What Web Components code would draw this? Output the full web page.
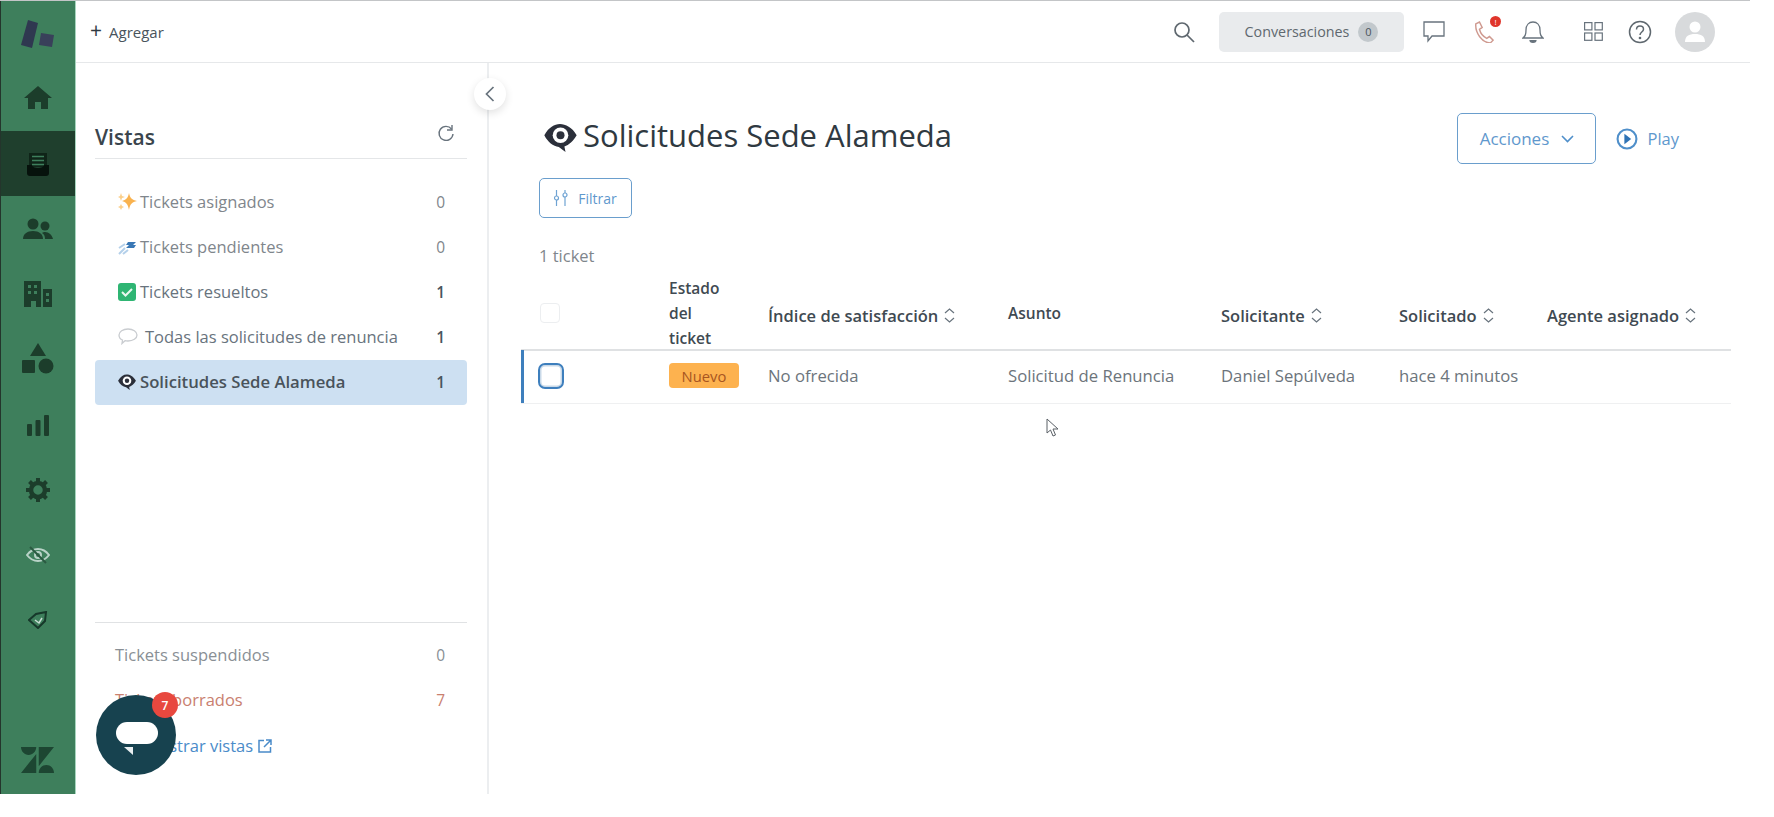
<!DOCTYPE html>
<html lang="es"><head><meta charset="utf-8"><title>Solicitudes Sede Alameda</title>
<style>
html,body{margin:0;padding:0;background:#fff;height:817px;overflow:hidden;font-family:"Open Sans","Noto Sans",sans-serif;color:#2f3941}
</style></head><body>
<x-app></x-app>
<script>
const EYE='<path d="M0 11C4 4 9 1 14 1s11 3 15 10c-3 5-7 9-11 10l1 5-6-4.500C8 21 3 17 0 11z" fill="currentColor"/><circle cx="14.500" cy="11" r="7" fill="#fff"/><circle cx="14.500" cy="11" r="3.600" fill="currentColor"/>';
const ICONS={
 logo:'<svg width="34" height="28" viewBox="0 0 34 28"><path d="M7 0l10 3-6 25-11-3z" fill="#2f3850"/><path d="M20 13l13 2-2 12-13-2z" fill="#39405a"/></svg>',
 home:'<svg width="28" height="24" viewBox="0 0 28 24" fill="currentColor"><path d="M14 1L0 13h4v11h7v-7h6v7h7V13h4z"/></svg>',
 tickets:'<svg width="22" height="24" viewBox="0 0 22 24"><path d="M2 1h18v14H2z" fill="#0f2418"/><path d="M5 4.500h12M5 8.500h12M5 12.500h12" stroke="#3e7f5c" stroke-width="1.600"/><path d="M0 13h5c0 2 3 3 6 3s6-1 6-3h5v8c0 2-1 3-3 3H3c-2 0-3-1-3-3z" fill="#06120c"/></svg>',
 people:'<svg width="30" height="22" viewBox="0 0 30 22" fill="currentColor"><circle cx="10" cy="6" r="5.500"/><path d="M0 21c0-5 4-8 10-8s10 3 10 8z"/><circle cx="22" cy="8" r="4.500"/><path d="M22 14c4 0 7 3 8 7h-8c0-3-1-5-3-6 1-1 2-1 3-1z"/></svg>',
 org:'<svg width="28" height="26" viewBox="0 0 28 26" fill="currentColor"><path fill-rule="evenodd" d="M0 0h17v26h-5v-6H7v6H0zM4 4v3h3V4zm6 0v3h3V4zM4 10v3h3v-3zm6 0v3h3v-3zM19 8h9v18h-9zm3 4v3h3v-3zm0 6v3h3v-3z"/></svg>',
 shapes:'<svg width="32" height="31" viewBox="0 0 32 31" fill="currentColor"><path d="M16 0l8 13H8z"/><rect y="17" width="13" height="13" rx="1"/><circle cx="24" cy="23" r="7.500"/></svg>',
 chart:'<svg width="22" height="21" viewBox="0 0 22 21" fill="currentColor"><rect y="9" width="5" height="12" rx="1"/><rect x="8.500" y="5" width="5" height="16" rx="1"/><rect x="17" width="5" height="21" rx="1"/></svg>',
 gear:'<svg width="24" height="24" viewBox="0 0 24 24"><circle cx="12" cy="12" r="7" fill="none" stroke="currentColor" stroke-width="4.500"/><path d="M12 0v5M12 19v5M0 12h5M19 12h5M3.500 3.500l3.500 3.500M17 17l3.500 3.500M20.500 3.500L17 7M7 17l-3.500 3.500" stroke="currentColor" stroke-width="4"/></svg>',
 eyeoff:'<svg width="24" height="18" viewBox="0 0 24 18" fill="none" stroke="#b9d3c8" stroke-width="2"><path d="M1 9c3-4 7-6 11-6s8 2 11 6c-3 4-7 6-11 6S4 13 1 9z"/><circle cx="12" cy="9" r="3"/><path d="M4 1l16 16" stroke="#2b5a42"/></svg>',
 tag:'<svg width="20" height="18" viewBox="0 0 20 18" fill="none" stroke="#16382a" stroke-width="2"><path d="M1 9l7-6 10-2-1 9-7 7z"/><path d="M7 9l4 3 3-5" stroke="#c9ded4" stroke-width="1.500"/></svg>',
 zd:'<svg width="33" height="26" viewBox="0 2.900 24 18.200" fill="#1d4632" preserveAspectRatio="none"><path d="M12.914 2.904V16.29L24 2.905H12.914zM0 2.906C0 5.966 2.483 8.45 5.543 8.45s5.542-2.484 5.543-5.544H0zm11.086 4.807L0 21.096h11.086V7.713zm7.37 7.840c-3.063 0-5.542 2.480-5.542 5.543H24c0-3.060-2.480-5.543-5.543-5.543z"/></svg>',
 search:'<svg width="22" height="22" viewBox="0 0 22 22" fill="none" stroke="#5f686f" stroke-width="1.700"><circle cx="9" cy="9" r="7"/><path d="M14 14l7 7"/></svg>',
 chat:'<svg width="22" height="22" viewBox="0 0 22 22" fill="none" stroke="#68737d" stroke-width="1.300"><path d="M1 1h20v14H9l-4 5v-5H1z"/></svg>',
 phone:'<svg width="20" height="22" viewBox="0 0 22 24" fill="none" stroke="#cf9a90" stroke-width="1.600"><path d="M2 3l4-2 3 6-3 2c1 4 4 8 8 10l3-2 4 4-3 3C9 24 1 13 2 3z"/></svg>',
 bell:'<svg width="22" height="24" viewBox="0 0 22 24" fill="none" stroke="#68737d" stroke-width="1.300"><path d="M1 18c2-2 3-3 3-8 0-5 3-8 7-8s7 3 7 8c0 5 1 6 3 8z"/><path d="M8 20c0 3 6 3 6 0" fill="#68737d"/></svg>',
 grid:'<svg width="19" height="19" viewBox="0 0 19 19" fill="none" stroke="#68737d" stroke-width="1.200"><rect x=".6" y=".6" width="7.300" height="7.300"/><rect x="11" y=".6" width="7.300" height="7.300"/><rect x=".6" y="11" width="7.300" height="7.300"/><rect x="11" y="11" width="7.300" height="7.300"/></svg>',
 avatar:'<svg width="20" height="22" viewBox="0 0 20 22" fill="#fff"><circle cx="10" cy="6" r="5.500"/><path d="M0 21c0-6 4-8 10-8s10 2 10 8z"/></svg>',
 refresh:'<svg width="19" height="19" viewBox="0 0 19 19" fill="none" stroke="#68737d" stroke-width="1.400"><path d="M15.500 5A7 7 0 1 0 17 10"/><path d="M16 1v5h-5" stroke-width="1.400"/></svg>',
 sparkle:'<svg width="19" height="19" viewBox="0 0 19 19"><path d="M11 1c1 5 3 7 8 8-5 1-7 3-8 9-1-6-3-8-7-9 4-1 6-3 7-8z" fill="#f9b24e"/><path d="M3 1l1 3 3 1-3 1-1 3-1-3-2-1 2-1zM3 12l1 2 2 1-2 1-1 2-1-2-2-1 2-1z" fill="#fbcf8a"/></svg>',
 comet:'<svg width="19" height="16" viewBox="0 0 19 16"><path d="M10 3h8l-3 3h3l-2 3H8l3-3H8z" fill="#3a78b5"/><path d="M7 5L1 9M7 9l-6 6M10 11l-5 4" stroke="#b4d0ea" stroke-width="2"/></svg>',
 check:'<svg width="18" height="18" viewBox="0 0 18 18"><rect width="18" height="18" rx="3" fill="#2fb573"/><path d="M4 9l3.500 3.500L14 6" fill="none" stroke="#e8f8ef" stroke-width="2"/></svg>',
 bubble:'<svg width="20" height="17" viewBox="0 0 20 17" fill="none" stroke="#c9ccd0" stroke-width="1.300"><path d="M10 1c5 0 9 2.500 9 6s-4 6-9 6c-1 0-2 0-3-.300L4 15.500l.500-3.500C2 11 1 9 1 7c0-3.500 4-6 9-6z"/></svg>',
 eye:'<svg width="18" height="16" viewBox="0 0 29 26" style="color:#2b2f3a">'+EYE+'</svg>',
 eyeBig:'<svg width="33" height="29" viewBox="0 0 29 26" style="color:#2b2f3a">'+EYE+'</svg>',
 ext:'<svg width="14" height="14" viewBox="0 0 14 14" fill="none" stroke="#4a8bc9" stroke-width="1.500"><path d="M6 1.500H1V13h11.500V8M8 1h5v5M13 1L6 8"/></svg>',
 sliders:'<svg width="14" height="16" viewBox="0 0 14 16" fill="none" stroke="#6fa3d3" stroke-width="1.200"><path d="M2.500 0v6M2.500 10v6M11 0v3M11 7v9"/><circle cx="2.500" cy="8" r="2"/><circle cx="11" cy="5" r="2"/></svg>',
 chev:'<svg width="13" height="8" viewBox="0 0 13 8" fill="none" stroke="#4f8fca" stroke-width="1.600"><path d="M1 1l5.500 5.500L12 1"/></svg>',
 play:'<svg width="22" height="22" viewBox="0 0 21 21"><circle cx="10.500" cy="10.500" r="9" fill="none" stroke="#4f8fca" stroke-width="2"/><path d="M8 5.500l6.500 5L8 15.500z" fill="#2f73b5"/></svg>',
 sort:'<svg width="11" height="15" viewBox="0 0 11 15" fill="none" stroke="#68737d" stroke-width="1.200"><path d="M1 5l4.500-4L10 5M1 10l4.500 4L10 10"/></svg>',
 back:'<svg width="10" height="16" viewBox="0 0 10 16" fill="none" stroke="#68737d" stroke-width="1.700"><path d="M8.500 1L1.500 8l7 7"/></svg>',
 cursor:'<svg width="13" height="19" viewBox="0 0 13 19" fill="#fff" stroke="#5a6066" stroke-width="1"><path d="M1 1v14l3.500-3 2.500 6 2.500-1-2.500-6H12z"/></svg>',
 help:'<svg width="24" height="24" viewBox="0 0 24 24" fill="none" stroke="#5f686f" stroke-width="1.500"><circle cx="12" cy="12" r="10.500"/><path d="M8.500 9.500c0-2 1.500-3.500 3.500-3.500s3.500 1.300 3.500 3.200c0 2.800-3.500 2.800-3.500 5.800"/><circle cx="12" cy="18" r=".6" fill="#5f686f"/></svg>'
};
function def(name,css,html){
 customElements.define(name,class extends HTMLElement{
  constructor(){super();this.attachShadow({mode:'open'});}
  connectedCallback(){
   const a=n=>this.getAttribute(n)||'';
   this.shadowRoot.innerHTML='<style>'+css+'</style>'+(typeof html==='function'?html(a):html);
  }
 });
}
def('x-app',`:host{display:flex;width:1750px;height:794px;box-sizing:border-box;border-top:1px solid #c3c5c7}
 .right{flex:1;display:flex;flex-direction:column;min-width:0}
 .body{flex:1;display:flex;min-height:0}`,
 `<x-rail></x-rail><div class="right"><x-topbar></x-topbar><div class="body"><x-sidebar></x-sidebar><x-main></x-main></div></div><x-launcher></x-launcher><x-cursor></x-cursor>`);

def('x-rail-item',`:host{display:flex;align-items:center;justify-content:center;height:65px;color:#1c3d2b}
 :host([active]){background:#1f3f2d}
 :host([icon=home]) svg{margin-top:-4px}
 :host([icon=chart]) svg{margin-top:4px}
 :host([icon=gear]) svg,:host([icon=eyeoff]) svg,:host([icon=tag]) svg{margin-top:2px}
 svg{margin-left:-1px}`,a=>ICONS[a('icon')]);
def('x-rail',`:host{display:flex;flex-direction:column;width:76px;flex:none;box-sizing:border-box;background:#3e7f5c;border-left:1px solid #24352c;border-right:1px solid #a8d6bf}
 .logo{height:65px;display:flex;align-items:center;justify-content:center}
 svg{margin-left:-1px}
 .zd{margin-top:auto;height:47px;display:flex;align-items:flex-start;justify-content:center}`,
 `<div class="logo">${ICONS.logo}</div>
 <x-rail-item icon="home"></x-rail-item><x-rail-item icon="tickets" active></x-rail-item><x-rail-item icon="people"></x-rail-item><x-rail-item icon="org"></x-rail-item><x-rail-item icon="shapes"></x-rail-item><x-rail-item icon="chart"></x-rail-item><x-rail-item icon="gear"></x-rail-item><x-rail-item icon="eyeoff"></x-rail-item><x-rail-item icon="tag"></x-rail-item>
 <div class="zd">${ICONS.zd}</div>`);

def('x-topbar',`:host{display:flex;align-items:center;height:62px;flex:none;box-sizing:border-box;border-bottom:1px solid #e6e8ea;padding:0 35px 0 14px;font-size:15px;color:#49545c}
 .add{display:flex;align-items:center;gap:7px}
 .plus{font-size:21px;line-height:1;font-weight:400;color:#2f3941;margin-top:-3px}
 .end{margin-left:auto;display:flex;align-items:center}
 .conv{display:flex;align-items:center;justify-content:center;gap:9px;width:185px;height:40px;background:#e9ebed;border-radius:5px;margin:0 19px 0 24px;color:#5f686f;font-size:14.300px}
 .n{width:20px;height:20px;border-radius:50%;background:#c2c8cc;display:flex;align-items:center;justify-content:center;font-size:11px;color:#49545c}
 .ic{position:relative;display:flex;align-items:center;justify-content:center}
 .dot{position:absolute;top:-5px;right:-7px;width:11px;height:11px;border-radius:50%;background:#e0352b;color:#fff;font-size:8px;line-height:11px;text-align:center}
 .av{width:40px;height:40px;border-radius:50%;background:#d8dadc;display:flex;align-items:center;justify-content:center;margin-left:23px}`,
 `<div class="add"><span class="plus">+</span><span>Agregar</span></div>
 <div class="end"><span class="ic">${ICONS.search}</span><div class="conv"><span>Conversaciones</span><span class="n">0</span></div>
 <span class="ic">${ICONS.chat}</span><span class="ic" style="margin-left:29px">${ICONS.phone}<span class="dot">!</span></span><span class="ic" style="margin-left:28px">${ICONS.bell}</span><span class="ic" style="margin-left:40px">${ICONS.grid}</span><span class="ic" style="margin-left:25px">${ICONS.help}</span><span class="av">${ICONS.avatar}</span></div>`);

def('x-view-row',`:host{display:flex;align-items:center;height:45px;box-sizing:border-box;padding:0 22px 0 23px;font-size:16.500px;color:#7f868c;border-radius:4px}
 :host([active]){background:#cde0f2;color:#49535b;font-weight:600;font-size:16.700px;margin-top:1px;padding-bottom:2px}
 :host([strong]){color:#68737d}
 .i{width:22px;flex:none;display:flex;align-items:center}
 :host([wide]) .i{width:27px}
 .c{margin-left:auto;font-size:15.500px}
 :host([strong]) .c,:host([active]) .c{font-weight:600;color:#49545c}`,
 a=>`<span class="i">${ICONS[a('icon')]}</span><span>${a('label')}</span><span class="c">${a('count')}</span>`);
def('x-foot-row',`:host{display:flex;align-items:center;height:45px;padding:0 22px 0 20px;font-size:16.500px;color:#898f95}
 :host([danger]){color:#c9806f}
 :host([link]){color:#4a8bc9;gap:5px;margin-top:1px}
 .c{margin-left:auto;font-size:15.500px}`,a=>`<span>${a('label')}</span>${a('icon')?ICONS[a('icon')]:''}<span class="c">${a('count')}</span>`);
def('x-sidebar',`:host{display:flex;flex-direction:column;width:413px;flex:none;box-sizing:border-box;padding:0 20px 26px 19px;border-right:2px solid #eceef0;position:relative}
 .h{display:flex;align-items:center;justify-content:space-between;height:48px;margin-top:48px;border-bottom:1px solid #e4e6e8;box-sizing:border-box;padding:4px 12px 0 0;font-size:21px;font-weight:600;color:#3a454d}
 .h svg{margin-top:-6px}
 .list{margin-top:20px}
 .foot{margin-top:auto;border-top:1px solid #e0e2e4;padding-top:9px}
 .col{position:absolute;top:15px;right:-19px;width:32px;height:32px;border-radius:50%;background:#fff;box-shadow:0 3px 8px rgba(0,0,0,.12);display:flex;align-items:center;justify-content:center}`,
 `<div class="h"><span>Vistas</span>${ICONS.refresh}</div>
 <div class="list">
 <x-view-row icon="sparkle" label="Tickets asignados" count="0"></x-view-row>
 <x-view-row icon="comet" label="Tickets pendientes" count="0"></x-view-row>
 <x-view-row icon="check" label="Tickets resueltos" count="1" strong></x-view-row>
 <x-view-row icon="bubble" label="Todas las solicitudes de renuncia" count="1" strong wide></x-view-row>
 <x-view-row icon="eye" label="Solicitudes Sede Alameda" count="1" active></x-view-row>
 </div>
 <div class="foot">
 <x-foot-row label="Tickets suspendidos" count="0"></x-foot-row>
 <x-foot-row label="Tickets borrados" count="7" danger></x-foot-row>
 <x-foot-row label="Administrar vistas" icon="ext" link></x-foot-row>
 </div>
 <div class="col">${ICONS.back}</div>`);

def('x-main',`:host{flex:1;display:block;min-width:0;box-sizing:border-box;padding:50px 19px 0 50px}
 .top{display:flex;align-items:center;height:51px}
 h1{margin:0;font-size:31px;font-weight:400;color:#2f3941;display:flex;align-items:center;gap:6px;margin-left:5px;margin-top:-7px}
 h1 svg{margin-top:4px}
 .end{margin-left:auto;display:flex;align-items:center;margin-right:52px}
 .btn{display:flex;align-items:center;justify-content:center;box-sizing:border-box;border:1.500px solid #6a9ecd;border-radius:5px;color:#5f98cd}
 .act{width:139px;height:51px;gap:12px;font-size:17px}
 .play{display:flex;align-items:center;gap:9px;font-size:16.500px;color:#5f98cd;margin-left:20px}
 .fil{width:93px;height:40px;gap:10px;font-size:14px;margin-top:14px}
 .cnt{margin-top:26px;font-size:16.500px;color:#7f868c;line-height:24px}
 x-ticket-table{margin:8px 0 0 -18px}`,
 `<div class="top"><h1>${ICONS.eyeBig}<span>Solicitudes Sede Alameda</span></h1><div class="end"><div class="btn act"><span>Acciones</span>${ICONS.chev}</div><div class="play">${ICONS.play}<span>Play</span></div></div></div>
 <div class="btn fil">${ICONS.sliders}<span>Filtrar</span></div>
 <div class="cnt">1 ticket</div>
 <x-ticket-table></x-ticket-table>`);

def('x-th',`:host{display:flex;align-items:center;gap:6px;font-weight:600;font-size:16.500px;color:#3f4a52;line-height:25px}
 :host([sort]){padding-top:3px}
 :host([plain]){font-size:15.500px}`,
 a=>`<span><slot></slot></span>${a('sort')==='1'?ICONS.sort:''}`);
def('x-ticket-table',`:host{display:block;--cols:148px 99px 240px 213px 178px 148px 183px;font-size:16.700px;color:#6c747b}
 .row{display:grid;grid-template-columns:var(--cols);align-items:center}
 .head{height:73px;border-bottom:2px solid #dfe1e3;margin-bottom:-1px}
 .body{height:54px;box-sizing:border-box;padding-bottom:2px;border-bottom:1px solid #eff0f1;box-shadow:inset 3px 0 0 #3e7fbd}
 .cb{width:20px;height:20px;border:1.500px solid #eceef0;border-radius:4px;box-sizing:border-box;margin:-2px 0 0 19px}
 .cb2{width:26px;height:26px;border:2.500px solid #3e7fbd;box-shadow:inset 0 0 0 1.500px #c9d9e8;border-radius:7px;box-sizing:border-box;margin-left:17px}
 .badge{display:inline-flex;width:70px;height:25px;align-items:center;justify-content:center;background:#fdb24f;border-radius:4px;color:#a8551f;font-size:14.800px}
 .cell{white-space:nowrap}`,
 `<div class="row head"><div class="cb"></div><x-th plain>Estado<br>del<br>ticket</x-th><x-th sort="1">Índice de satisfacción</x-th><x-th plain>Asunto</x-th><x-th sort="1">Solicitante</x-th><x-th sort="1">Solicitado</x-th><x-th sort="1">Agente asignado</x-th></div>
 <div class="row body"><div class="cb2"></div><div><span class="badge">Nuevo</span></div><span class="cell">No ofrecida</span><span class="cell">Solicitud de Renuncia</span><span class="cell">Daniel Sepúlveda</span><span class="cell">hace 4 minutos</span><span class="cell"></span></div>`);

def('x-launcher',`:host{position:absolute;left:96px;top:695px;width:80px;height:80px;border-radius:50%;background:#17424f;display:block}
 .p{position:absolute;left:20px;top:27px;width:42px;height:22px;border-radius:11px;background:#fff}
 .t{position:absolute;left:28px;top:52px;width:0;height:0;border-right:9px solid #e8eef0;border-bottom:8px solid transparent}
 .b{position:absolute;left:56px;top:-3px;width:26px;height:26px;border-radius:50%;background:#e8483f;color:#fff;font-size:12px;font-weight:600;display:flex;align-items:center;justify-content:center}`,
 `<div class="p"></div><div class="t"></div><div class="b">7</div>`);
def('x-cursor',`:host{position:absolute;left:1046px;top:418px;display:block;line-height:0}`,ICONS.cursor);
</script></body></html>
